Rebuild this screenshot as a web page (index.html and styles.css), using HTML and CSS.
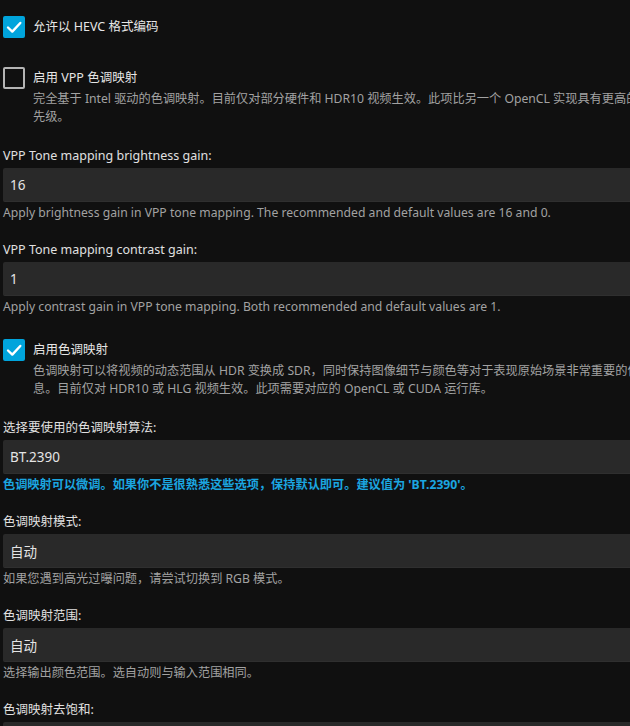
FILE: index.html
```html
<!DOCTYPE html>
<html lang="zh-CN">
<head>
<meta charset="utf-8">
<title>转码设置</title>
<link rel="stylesheet" href="styles.css">
</head>
<body>
<main class="page">
  <div class="check check--plain">
    <div class="check-row">
      <span class="box box--on"><svg viewBox="0 0 22 22" width="22" height="22"><path d="M5 11.5 L9.3 15.6 L17.3 7" fill="none" stroke="#fff" stroke-width="2.4" stroke-linecap="round" stroke-linejoin="round"/></svg></span>
      <span class="check-label">允许以 HEVC 格式编码</span>
    </div>
  </div>

  <div class="check">
    <div class="check-row">
      <span class="box"></span>
      <span class="check-label">启用 VPP 色调映射</span>
    </div>
    <p class="desc desc--indent">完全基于 Intel 驱动的色调映射。目前仅对部分硬件和 HDR10 视频生效。此项比另一个 OpenCL 实现具有更高的优<br>先级。</p>
  </div>

  <div class="field">
    <label class="field-label">VPP Tone mapping brightness gain:</label>
    <div class="input">16</div>
    <p class="desc">Apply brightness gain in VPP tone mapping. The recommended and default values are 16 and 0.</p>
  </div>

  <div class="field">
    <label class="field-label">VPP Tone mapping contrast gain:</label>
    <div class="input">1</div>
    <p class="desc">Apply contrast gain in VPP tone mapping. Both recommended and default values are 1.</p>
  </div>

  <div class="check">
    <div class="check-row">
      <span class="box box--on"><svg viewBox="0 0 22 22" width="22" height="22"><path d="M5 11.5 L9.3 15.6 L17.3 7" fill="none" stroke="#fff" stroke-width="2.4" stroke-linecap="round" stroke-linejoin="round"/></svg></span>
      <span class="check-label">启用色调映射</span>
    </div>
    <p class="desc desc--indent">色调映射可以将视频的动态范围从 HDR 变换成 SDR，同时保持图像细节与颜色等对于表现原始场景非常重要的信<br>息。目前仅对 HDR10 或 HLG 视频生效。此项需要对应的 OpenCL 或 CUDA 运行库。</p>
  </div>

  <div class="field">
    <label class="field-label">选择要使用的色调映射算法:</label>
    <div class="input">BT.2390</div>
    <p class="desc desc--accent">色调映射可以微调。如果你不是很熟悉这些选项，保持默认即可。建议值为 'BT.2390'。</p>
  </div>

  <div class="field">
    <label class="field-label">色调映射模式:</label>
    <div class="input">自动</div>
    <p class="desc">如果您遇到高光过曝问题，请尝试切换到 RGB 模式。</p>
  </div>

  <div class="field">
    <label class="field-label">色调映射范围:</label>
    <div class="input">自动</div>
    <p class="desc">选择输出颜色范围。选自动则与输入范围相同。</p>
  </div>

  <div class="field">
    <label class="field-label">色调映射去饱和:</label>
    <div class="input">0</div>
  </div>
</main>
</body>
</html>
```

FILE: styles.css
```css
html, body {
  margin: 0;
  padding: 0;
  background: #101010;
  overflow: hidden;
}

body {
  font-family: "Noto Sans", "Noto Sans CJK SC", sans-serif;
  color: #e2e2e2;
}

.page {
  width: 700px;
  margin-left: 3px;
  padding-top: 16px;
}

.check {
  margin: 23px 0 20px;
}

.check:first-child {
  margin-top: 0;
}

.check--plain {
  margin-bottom: 29px;
}

.check-row {
  display: flex;
  align-items: center;
  gap: 8px;
  height: 22px;
}

.box {
  width: 22px;
  height: 22px;
  box-sizing: border-box;
  border: 2px solid #b4b4b4;
  border-radius: 2px;
  flex: none;
  display: flex;
}

.box--on {
  background: #00a4dc;
  border-color: #00a4dc;
}

.box--on svg {
  margin: -2px;
}

.check-label {
  font-size: 12.5px;
  line-height: 22px;
  color: #e6e6e6;
}

.desc {
  margin: 2px 0 0;
  font-size: 12.2px;
  line-height: 18px;
  color: #a2a2a2;
}

.desc--indent {
  margin-top: 1px;
  padding-left: 30px;
  white-space: nowrap;
}

.desc--accent {
  color: #1ba6e0;
  font-weight: bold;
}

.field {
  margin-bottom: 18px;
}

.field-label {
  display: block;
  font-size: 12.5px;
  line-height: 20px;
  margin-bottom: 2px;
  color: #e0e0e0;
}

.input {
  height: 34px;
  box-sizing: border-box;
  background: #292929;
  border-radius: 2px;
  border-bottom: 1px solid #2f2f2f;
  padding: 0 7px;
  display: flex;
  align-items: center;
  font-size: 13.5px;
  color: #e4e4e4;
}
```
